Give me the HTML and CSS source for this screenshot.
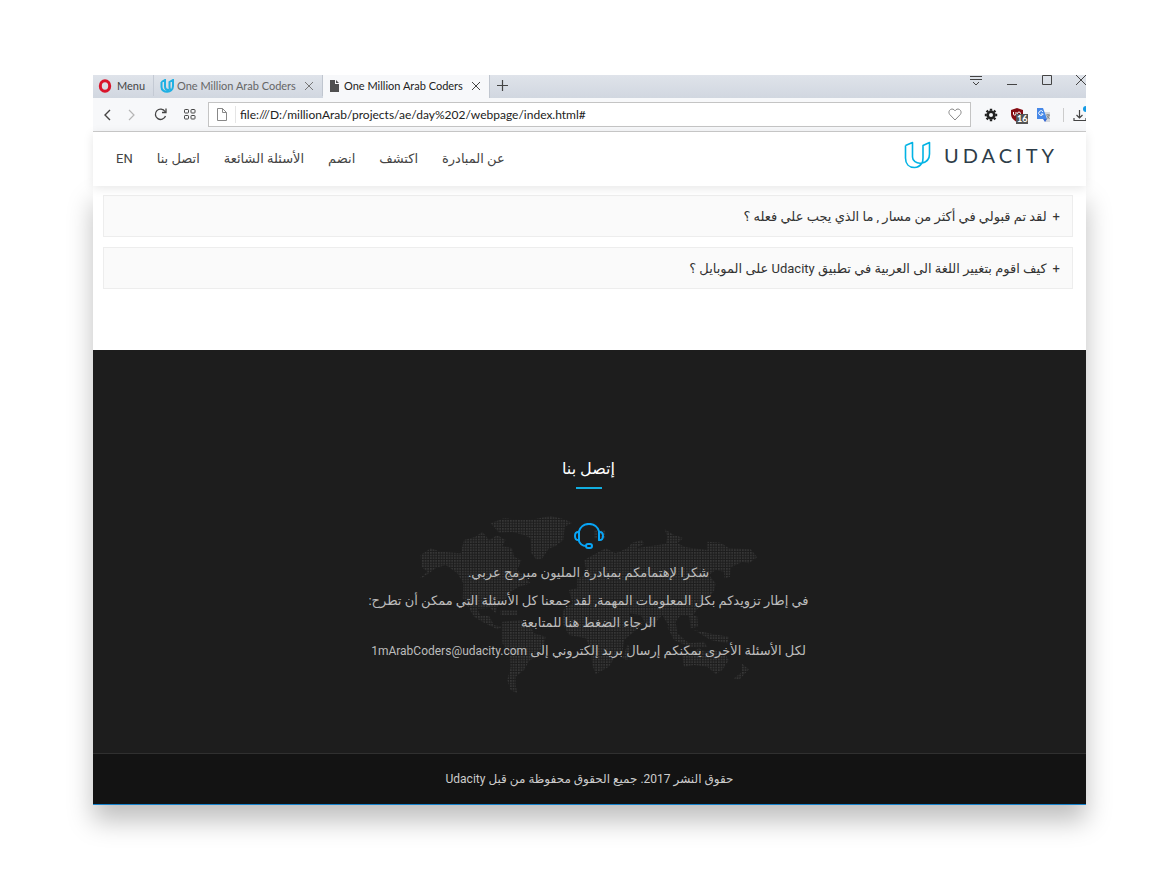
FILE: index.html
```html
<!DOCTYPE html>
<html lang="ar">
<head>
<meta charset="utf-8">
<title>One Million Arab Coders</title>
<link rel="stylesheet" href="styles.css">
</head>
<body>
<div class="window">
  <div class="browser">
    <div class="tabs">
      <button class="menu"><svg width="14" height="14" viewBox="0 0 14 14"><ellipse cx="7" cy="7" rx="4.7" ry="5.2" fill="none" stroke="#d9142b" stroke-width="3"/></svg>Menu</button>
      <div class="tab">
        <svg width="15" height="14" viewBox="0 0 15 14" fill="none" stroke="#1fb0e3" stroke-width="2"><path d="M1.500 3 5 1v6.500c0 2 1 3.500 4 3.500M1.500 3v5c0 6.500 11.500 6.500 11.500-1V1L9.500 3v5q0 2 1 3"/></svg>
        <span class="tab-title">One Million Arab Coders</span>
        <button class="close" aria-label="Close tab"><svg width="10" height="10" viewBox="0 0 10 10"><path d="m1 1 8 8m0-8-8 8" stroke="#777" fill="none"/></svg></button>
      </div>
      <div class="tab active">
        <svg class="doc" width="11" height="13" viewBox="0 0 11 13"><path d="M1 1h5v4h4v8H1zM7 1l3 3H7z" fill="#505050"/></svg>
        <span class="tab-title">One Million Arab Coders</span>
        <button class="close" aria-label="Close tab"><svg width="10" height="10" viewBox="0 0 10 10"><path d="m1 1 8 8m0-8-8 8" stroke="#444" fill="none"/></svg></button>
      </div>
      <button class="new" aria-label="New tab"><svg width="11" height="11" viewBox="0 0 11 11"><path d="M5.500 0v11M0 5.500h11" stroke="#444" stroke-width="1.200"/></svg></button>
      <div class="controls">
        <button aria-label="Tab menu"><svg width="14" height="11" viewBox="0 0 14 11" fill="none" stroke="#444"><path d="M1 1.500h12M1 4.500h12M4 7l3 3 3-3"/></svg></button>
        <button aria-label="Minimize"><svg width="12" height="11" viewBox="0 0 12 11"><path d="M1 9.500h10" stroke="#444"/></svg></button>
        <button aria-label="Maximize"><svg width="12" height="11" viewBox="0 0 12 11"><path d="M1.500.5h9v9h-9z" fill="none" stroke="#444"/></svg></button>
        <button aria-label="Close"><svg width="10" height="11" viewBox="0 0 10 11"><path d="m0 0 10 10M10 0 0 10" stroke="#444"/></svg></button>
      </div>
    </div>
    <div class="toolbar">
      <div class="moves">
        <button aria-label="Back"><svg width="8" height="12" viewBox="0 0 8 12" fill="none" stroke="#444" stroke-width="1.400"><path d="M7 1 2 6l5 5"/></svg></button>
        <button aria-label="Forward"><svg width="8" height="12" viewBox="0 0 8 12" fill="none" stroke="#b5b5b5" stroke-width="1.200"><path d="m1 1 5 5-5 5"/></svg></button>
        <button aria-label="Reload"><svg width="13" height="13" viewBox="0 0 13 13" fill="none" stroke="#444" stroke-width="1.300"><path d="M11.500 8A5.200 5.200 0 1 1 11 3.500M12 .5v4H8"/></svg></button>
        <button aria-label="Speed dial"><svg width="12" height="11" viewBox="0 0 12 11" fill="none" stroke="#444"><rect x=".5" y=".5" width="4" height="3.500" rx=".7"/><rect x="7" y=".5" width="4" height="3.500" rx=".7"/><rect x=".5" y="6.500" width="4" height="3.500" rx=".7"/><rect x="7" y="6.500" width="4" height="3.500" rx=".7"/></svg></button>
      </div>
      <div class="address">
        <svg width="10" height="13" viewBox="0 0 10 13" fill="none" stroke="#888"><path d="M.5.5h5l4 4v8h-9zM5.500.5v4h4"/></svg>
        <input type="text" aria-label="Address" value="file:///D:/millionArab/projects/ae/day%202/webpage/index.html#">
        <svg width="14" height="13" viewBox="0 0 14 13" fill="none" stroke="#888"><path d="M7 12 1.700 6.500C-1 3 4-1.500 7 2.800 10-1.500 15 3 12.300 6.500z"/></svg>
      </div>
      <div class="extensions">
        <svg width="14" height="14" viewBox="-7 -7 14 14"><circle r="3.300" fill="none" stroke="#222" stroke-width="2.600"/><path d="M0-6.200v2M0 4.200v2M-6.200 0h2m8.400 0h2M-4.400-4.400-3-3m6 6 1.400 1.400M-4.400 4.400-3 3m6-6 1.400-1.400" stroke="#222" stroke-width="2.400"/></svg>
        <span class="shield"><svg width="14" height="14" viewBox="0 0 14 14"><path d="M7 0 13 2v4c0 4-3 6.500-6 8-3-1.500-6-4-6-8V2z" fill="#850b12"/><path d="M3.500 4v2c0 1.600 2.500 1.600 2.500 0V4" fill="none" stroke="#fff"/><circle cx="9" cy="5.500" r="1.500" fill="none" stroke="#fff"/></svg><span class="badge">16</span></span>
        <svg width="15" height="14" viewBox="0 0 15 14"><path d="M6 4h8v10H9z" fill="#d4d7dc"/><path d="M1 0h6l4 11H1z" fill="#4688e8"/><path d="m7 11 4 0-2 3z" fill="#3367d6"/><path d="M7 3.800A2.300 2.300 0 1 0 7.200 6H5" fill="none" stroke="#fff"/><path d="M10 7h4m-2-1v1m1 0c0 2-1 3-2.500 4M11 8l2.500 3" fill="none" stroke="#777" stroke-width=".8"/></svg>
        <span class="rule"></span>
        <svg class="download" width="13" height="17" viewBox="0 0 13 17" fill="none" stroke="#444" stroke-width="1.200"><circle cx="13" cy="3" r="3" fill="#159be5" stroke="none"/><path d="M6.500 4v8M3.500 9l3 3 3-3M1 12v2.500h12V12"/></svg>
      </div>
    </div>
  </div>
  <div class="page" dir="rtl">
    <header class="site">
      <a class="brand" href="#" dir="ltr">
        <svg width="28" height="28" viewBox="0 0 28 28" fill="none" stroke="#02b3e4" stroke-width="1.600" stroke-linejoin="round"><path d="M1.500 4.500 8.500 1.500v14.500c0 3.500 3.500 7 9.500 6M1.500 4.500V17C1.500 23 5 26.500 10.500 26.500 14 26.500 16 25 18 22 23 21 25.500 17.500 25.500 13V1.500L19 4.500v12.500c0 2-.3 3.500-1 5"/></svg>
        <span>UDACITY</span>
      </a>
      <nav>
        <a href="#">عن المبادرة</a><a href="#">اكتشف</a><a href="#">انضم</a><a href="#">الأسئلة الشائعة</a><a href="#">اتصل بنا</a><a href="#">EN</a>
      </nav>
    </header>
    <div class="content">
    <main>
      <section class="faq">
        <button><span class="plus">+</span><span>لقد تم قبولي في أكثر من مسار , ما الذي يجب علي فعله ؟</span></button>
        <button><span class="plus">+</span><span>كيف اقوم بتغيير اللغة الى العربية في تطبيق Udacity على الموبايل ؟</span></button>
      </section>
      <section class="contact">
        <h2>إتصل بنا</h2>
        <div class="message">
          <svg class="map" width="339" height="180" viewBox="178 225 1017 540" aria-hidden="true">
            <defs><pattern id="dots" width="8" height="8" patternUnits="userSpaceOnUse"><rect width="5" height="5" fill="#383838"/></pattern></defs>
            <g fill="url(#dots)">
              <path d="M390 250 430 235 490 240 520 238 570 228 605 236 635 248 612 260 608 300 582 320 565 325 545 355 528 360 512 340 510 295 490 285 455 276 415 278Z"/>
              <path d="M180 345 210 325 240 335 300 340 310 300 345 290 365 275 385 300 410 286 435 300 425 318 455 325 460 350 482 360 470 390 490 410 510 430 475 440 450 455 430 485 410 500 405 520 388 504 350 506 358 525 385 528 400 555 425 560 410 568 370 548 340 530 325 505 306 475 308 430 290 400 255 375 225 385 190 410 178 415 200 395 182 380Z"/>
              <path d="M420 510h50v15h-50zM425 545 480 540 510 562 520 580 555 590 550 612 525 650 505 663 490 690 465 710 465 735 470 760 450 750 440 720 450 680 448 640 425 610Z"/>
              <path d="M670 360 735 325 765 340 800 325 815 308 845 300 850 312 825 325 870 318 915 312 920 290 912 268 940 285 968 294 950 310 975 322 1040 330 1040 305 1080 308 1105 325 1170 328 1190 352 1165 370 1145 366 1110 382 1108 410 1092 415 1090 395 1065 390 1045 405 1065 430 1060 455 1035 475 1015 500 995 530 960 525 945 545 950 580 928 565 905 525 865 570 840 525 805 520 820 545 850 548 815 580 790 600 785 640 760 655 745 680 705 702 695 675 690 625 675 595 625 585 605 550 608 510 635 490 625 450 650 445 650 415 680 405Z"/>
              <path d="M700 270h35v25h-35zM985 520 1010 530 1012 560 990 565zM920 560 950 580 985 610 1030 605 1040 620 985 620 940 600zM1000 570 1055 582 1105 590 1100 610 1050 600zM965 650 1015 625 1035 635 1058 630 1090 640 1105 660 1085 690 1065 702 1040 680 1000 675 970 680zM1140 668 1165 688 1135 720 1120 715 1145 695zM800 615 810 620 800 660 785 655z"/>
            </g>
          </svg>
          <svg class="headset" width="30" height="26" viewBox="0 0 30 26" fill="none" stroke="#08a4f5" stroke-width="2"><path d="M4.500 9.500C7-2 23-2 25.500 9.500M4.500 17q2 6 7.500 6"/><path d="M5 9v8C2 17.500 1 15.500 1 13s1-4.500 4-4zM25 9v8c3 .5 4-1.500 4-4s-1-4.500-4-4z"/><rect x="12" y="21" width="6" height="4" rx="2"/></svg>
          <p>شكرا لإهتمامكم بمبادرة المليون مبرمج عربي.</p>
          <p>في إطار تزويدكم بكل المعلومات المهمة, لقد جمعنا كل الأسئلة التي ممكن أن تطرح:<br><a href="#">الرجاء الضغط هنا للمتابعة</a></p>
          <p>لكل الأسئلة الأخرى يمكنكم إرسال بريد إلكتروني إلى <a class="email" href="mailto:1mArabCoders@udacity.com">1mArabCoders@udacity.com</a></p>
        </div>
      </section>
    </main>
    <footer>حقوق النشر 2017. جميع الحقوق محفوظة من قبل Udacity</footer>
    </div>
  </div>
</div>
</body>
</html>
```

FILE: styles.css
```css
* { box-sizing: border-box; }
body { margin: 0; padding: 75px 79px 78px 93px; background: #fff; font-family: Lato, sans-serif; }
button { font: inherit; border: 0; padding: 0; background: none; color: inherit; }
a { color: inherit; text-decoration: none; }
svg { display: block; flex: none; }

.tabs { display: flex; align-items: stretch; height: 23px; padding-bottom: 2px; background: linear-gradient(#dfe3ea, #d1d7e0); color: #444; font-size: 11px; }
.menu { display: flex; align-items: center; gap: 5px; width: 61px; padding-left: 5px; border-right: 1px solid #c4cad4; }
.tab { display: flex; align-items: center; gap: 2px; width: 169px; padding: 0 8px 0 6px; border-right: 1px solid #c0c6cf; color: #666; }
.tab.active { width: 167px; gap: 4px; margin-bottom: -2px; padding-bottom: 2px; background: #f7f8fa; color: #222; }
.tab-title { flex: 1; white-space: nowrap; }
.new { width: 26px; padding-left: 7px; }
.controls { display: flex; align-items: flex-start; gap: 23px; margin-left: auto; overflow: hidden; }
.toolbar { display: flex; align-items: center; height: 34px; background: #f7f8fa; border-bottom: 1px solid #ccc; overflow: hidden; }
.moves { display: flex; align-items: center; justify-content: space-between; width: 115px; padding: 0 12px 0 10px; }
.address { display: flex; flex: 1; align-items: center; gap: 8px; height: 25px; padding: 0 8px; background: #fff; border: 1px solid #c4c4c4; }
.address input { flex: 1; min-width: 0; height: 17px; padding: 0 0 0 4px; border: 0; border-left: 1px solid #e5e5e5; color: #222; background: #fff; font: 12px Lato, sans-serif; }
.extensions { display: flex; align-items: center; gap: 12px; width: 115px; padding-left: 13px; }
.shield { position: relative; }
.badge { position: absolute; left: 6px; top: 6px; padding: 0 1px; background: #555; color: #fff; font-size: 9px; line-height: 10px; font-weight: 700; }
.rule { width: 1px; height: 14px; background: #ccc; }
.download { margin-left: -3px; }

.page { font-family: Roboto, "DejaVu Sans", sans-serif; }
.content { background: #fff; box-shadow: 0 16px 24px rgba(0, 0, 0, .25); }
.site { position: relative; display: flex; align-items: center; justify-content: space-between; height: 54px; padding: 0 28px 8px 23px; background: #fff; box-shadow: 0 2px 10px rgba(0, 0, 0, .1); }
.brand { display: flex; align-items: center; gap: 12px; color: #2e3d49; font: 20px Lato, sans-serif; letter-spacing: 4px; }
nav { display: flex; gap: 24px; padding-top: 6px; color: #444; font-size: 13px; }
.faq { display: grid; gap: 10px; padding: 9px 13px 61px 10px; }
.faq button { display: flex; align-items: center; gap: 6px; height: 42px; padding: 0 12px; background: #fafafa; border: 1px solid #ededed; color: #333; font-size: 13px; }
.contact { padding: 107px 22px 85px 20px; background: #1d1d1d; color: #bcbcbc; text-align: center; }
h2 { margin: 0; color: #fff; font-size: 16px; line-height: 24px; font-weight: 500; }
h2::after { content: ""; display: block; width: 26px; height: 2px; margin: 6px auto 0; background: #12aee0; }
.message { position: relative; padding-top: 34px; font-size: 13px; line-height: 22px; }
.map { position: absolute; top: 26px; left: 50%; margin-left: -169px; }
.headset { position: relative; margin: 0 auto 13px; }
.email { font-size: 12px; }
p { position: relative; margin: 0 0 6px; }
footer { padding: 14px; background: #131313; border-top: 1px solid #303030; border-bottom: 1px solid #1682cc; color: #ccc; text-align: center; font-size: 12px; line-height: 22px; }
```
